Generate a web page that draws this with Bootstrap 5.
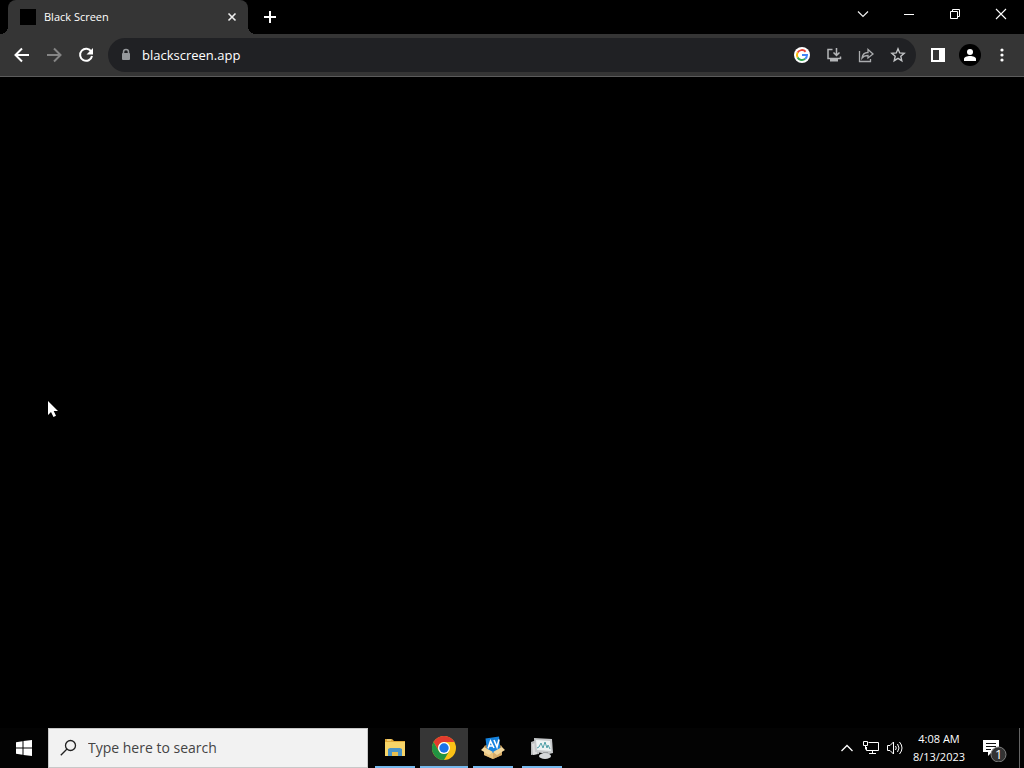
<!DOCTYPE html>
<html lang="en">
<head>
<meta charset="utf-8">
<meta name="viewport" content="width=device-width, initial-scale=1">
<title>Black Screen</title>
<link href="https://cdn.jsdelivr.net/npm/bootstrap@5.3.0/dist/css/bootstrap.min.css" rel="stylesheet">
<style>
  body { background: #000; color: #fff; font-family: "Open Sans", "Noto Sans", sans-serif; font-size: 11px; line-height: 18px; }
  svg { display: block; flex: none; }
  button { color: inherit; }
  .tool { border: 0; background: none; padding: 0; display: flex; align-items: center; justify-content: center; flex: none; }
  .tabstrip { height: 34px; padding-left: 8px; }
  .browser-tab { width: 240px; height: 34px; background: #353535; border-radius: 8px 8px 0 0; padding: 0 8px 0 12px; position: relative; }
  .browser-tab::before, .browser-tab::after { content: ""; position: absolute; bottom: 0; width: 8px; height: 8px; }
  .browser-tab::before { left: -8px; background: radial-gradient(circle at 0 0, #000 8px, #353535 8px); }
  .browser-tab::after { right: -8px; background: radial-gradient(circle at 100% 0, #000 8px, #353535 8px); }
  .favicon { width: 16px; height: 16px; background: #000; }
  .tab-close { width: 16px; height: 16px; }
  .new-tab { width: 28px; height: 34px; margin-left: 8px; }
  .win { width: 46px; height: 28px; }
  .toolbar { height: 43px; background: #353535; border-bottom: 1px solid #5c5c5c; padding: 0 6px; }
  .nav-tool { width: 32px; height: 32px; }
  .omnibox { height: 34px; border-radius: 17px; background: #202124; padding: 0 2px; margin: 0 6px; }
  .omnibox input { border: 0; outline: 0; background: none; color: #fff; font-size: 13px; line-height: 20px; min-width: 0; padding: 0; }
  .taskbar { height: 40px; background: #030303; }
  .start { width: 48px; height: 40px; }
  .search { width: 320px; height: 40px; background: #f2f2f2; border: 1px solid #c8c8c8; padding: 0 11px; color: #222; margin-right: 3px; }
  .search input { border: 0; outline: 0; background: none; font-size: 14px; line-height: 20px; padding: 0; min-width: 0; }
  .search input::placeholder { color: #444; opacity: 1; }
  .tasks { gap: 1px; }
  .task { width: 48px; height: 40px; position: relative; }
  .task::after { content: ""; position: absolute; bottom: 0; left: 4px; right: 4px; height: 2px; background: #76b9ed; }
  .task.active { background: #363636; }
  .task.active::after { left: 0; right: 0; }
  .tray { width: 24px; height: 40px; }
  .clock { width: 64px; height: 40px; text-align: center; }
  .notify { width: 48px; height: 40px; }
  .desktop-edge { width: 5px; height: 40px; border-left: 1px solid #666; }
  .pointer { position: absolute; left: 47px; top: 400px; }
</style>
</head>
<body>
<div class="d-flex flex-column min-vh-100">
  <header>
    <div class="tabstrip d-flex">
      <div class="browser-tab d-flex align-items-center">
        <span class="favicon me-2"></span>
        <span class="flex-grow-1">Black Screen</span>
        <button class="tool tab-close" aria-label="Close tab"><svg width="16" height="16" stroke="#eee" stroke-width="1.600"><path d="M4.500 4.500l7 7m0-7l-7 7"/></svg></button>
      </div>
      <button class="tool new-tab" aria-label="New tab"><svg width="14" height="14" stroke="#fff" stroke-width="2"><path d="M7 1v12M1 7h12"/></svg></button>
      <div class="d-flex ms-auto">
        <button class="tool win" aria-label="Search tabs"><svg width="12" height="12" fill="none" stroke="#eee" stroke-width="1.200"><path d="M1 3.500l5 5 5-5"/></svg></button>
        <button class="tool win" aria-label="Minimize"><svg width="12" height="12" stroke="#fff"><path d="M1 6.500h10"/></svg></button>
        <button class="tool win" aria-label="Restore"><svg width="12" height="12" fill="none" stroke="#fff"><path d="M1.500 3.500h7v7h-7zM3.500 3.500v-2h7v7h-2"/></svg></button>
        <button class="tool win" aria-label="Close"><svg width="12" height="12" stroke="#fff" stroke-width="1.100"><path d="M1 1l10 10M11 1L1 11"/></svg></button>
      </div>
    </div>
    <div class="toolbar d-flex align-items-center">
      <button class="tool nav-tool" aria-label="Back"><svg width="16" height="16" fill="none" stroke="#fff" stroke-width="2"><path d="M15 8H2M8 1.500L1.500 8 8 14.500"/></svg></button>
      <button class="tool nav-tool" aria-label="Forward"><svg width="16" height="16" fill="none" stroke="#858585" stroke-width="2"><path d="M1 8h13M8 1.500L14.500 8 8 14.500"/></svg></button>
      <button class="tool nav-tool" aria-label="Reload"><svg width="16" height="16" fill="none" stroke="#fff" stroke-width="2"><path d="M13.300 4.800A6 6 0 1 0 14 9"/><path d="M15 1v6.500H8.500z" fill="#fff" stroke="none"/></svg></button>
      <div class="omnibox d-flex align-items-center flex-grow-1">
        <button class="tool nav-tool" aria-label="Site information"><svg width="10" height="14" fill="none" stroke="#96999c" stroke-width="1.500"><path d="M2.500 6V4a2.500 2.500 0 0 1 5 0v2"/><rect x="1" y="5" width="8" height="7" rx="1" fill="#96999c" stroke="none"/></svg></button>
        <input class="flex-grow-1" type="text" value="blackscreen.app" aria-label="Address">
        <button class="tool nav-tool" aria-label="Google"><svg width="16" height="16" fill="none" stroke-width="2"><circle cx="8" cy="8" r="8" fill="#fff"/><path d="M11.600 4.700A5 5 0 0 0 3.600 5.600" stroke="#ea4335"/><path d="M3.600 5.600a5 5 0 0 0 0 4.800" stroke="#fbbc05"/><path d="M3.600 10.400a5 5 0 0 0 7.600 1.400" stroke="#34a853"/><path d="M11.200 11.800A5 5 0 0 0 13 8H8" stroke="#4285f4"/></svg></button>
        <button class="tool nav-tool" aria-label="Install app"><svg width="16" height="16" fill="none" stroke="#b4b6b8" stroke-width="1.500"><path d="M6.500 2.500H2v9h12.500V9.500M10.500 1v7M7.500 5.500l3 3 3-3"/><path d="M4 12h8v2.500H4z" fill="#b4b6b8" stroke="none"/></svg></button>
        <button class="tool nav-tool" aria-label="Share"><svg width="16" height="16" fill="none" stroke="#aaacae" stroke-width="1.300"><path d="M1.500 4v10.500h11V12M4 11c.5-4 2.500-5.500 6-5.500V2.500L15 7l-5 4V8.500c-2.500 0-4.500.5-6 2.500z"/></svg></button>
        <button class="tool nav-tool" aria-label="Bookmark"><svg width="16" height="16" fill="none" stroke="#c4c6c8" stroke-width="1.400"><path d="M8 1.800l1.700 4.100 4.500.4-3.400 3 1 4.400L8 11.400l-3.800 2.300 1-4.400-3.400-3 4.500-.4z"/></svg></button>
      </div>
      <button class="tool nav-tool" aria-label="Side panel"><svg width="16" height="16"><path d="M1 1h14v14H1zM3 3v10h6V3z" fill="#fff" fill-rule="evenodd"/></svg></button>
      <button class="tool nav-tool" aria-label="Profile"><svg width="22" height="22"><circle cx="11" cy="11" r="11" fill="#000"/><circle cx="11" cy="8" r="3" fill="#fff"/><path d="M5 17v-2c0-2 3-3 6-3s6 1 6 3v2z" fill="#fff"/></svg></button>
      <button class="tool nav-tool" aria-label="Menu"><svg width="4" height="16" fill="#fff"><circle cx="2" cy="3" r="1.600"/><circle cx="2" cy="8" r="1.600"/><circle cx="2" cy="13" r="1.600"/></svg></button>
    </div>
  </header>

  <main class="flex-grow-1"></main>

  <footer class="taskbar d-flex align-items-center">
    <button class="tool start" aria-label="Start"><svg width="16" height="16" fill="#fff"><path d="M0 2.300L6.500 1.300V7.500H0zM7.500 1.100L16 0V7.500H7.500zM0 8.500h6.500v6.200L0 13.700zM7.500 8.500H16V16l-8.500-1.100z"/></svg></button>
    <label class="search d-flex align-items-center">
      <svg class="me-2" width="20" height="20" fill="none" stroke="#222" stroke-width="1.300"><circle cx="10.500" cy="7.500" r="5"/><path d="M7 11L.8 17.200"/></svg>
      <input class="flex-grow-1" type="text" placeholder="Type here to search" aria-label="Search">
    </label>
    <div class="tasks d-flex">
      <button class="tool task" aria-label="File Explorer"><svg width="24" height="24"><path d="M2 3h7l2 2h11v6H2z" fill="#e0aa3a"/><path d="M2 6h20v14H2z" fill="#f7d568"/><path d="M5 20v-7l2-1h10l2 1v7h-4v-4H9v4z" fill="#4a94c8"/><path d="M9 16h6v4H9z" fill="#eabf4d"/><path d="M4 4h4" stroke="#faedae"/></svg></button>
      <button class="tool task active" aria-label="Google Chrome"><svg width="24" height="24"><circle cx="12" cy="12" r="12" fill="#fbc116"/><path d="M1.600 6A12 12 0 0 1 22.400 6H12a6 6 0 0 0-5.200 9z" fill="#e33b2e"/><path d="M1.600 6A12 12 0 0 0 12 24l5.200-9A6 6 0 0 1 6.800 15z" fill="#229342"/><circle cx="12" cy="12" r="6" fill="#fff"/><circle cx="12" cy="12" r="4.700" fill="#1a73e8"/></svg></button>
      <button class="tool task" aria-label="Antivirus package"><svg width="24" height="24"><path d="M3 10l9-4 9 4v9l-9 4-9-4z" fill="#b88b48"/><path d="M4.500 2.500L18 .5l1.500 13L12 18l-6-4z" fill="#1683df"/><path d="M7 12.500L9.500 5l3.500 7m-5-2h4m1-6l3 7 2-7.500" fill="none" stroke="#fff" stroke-width="1.600"/><path d="M3 12l9 5v6l-9-4z" fill="#e8c17b"/><path d="M21 12l-9 5v6l9-4z" fill="#d6ab68"/><path d="M3 11l-3 3 8 5 4-3zM21 11l3 3-8 5-4-3z" fill="#f3d79c"/></svg></button>
      <button class="tool task" aria-label="System monitor"><svg width="24" height="24"><path d="M1 6l8-3v15l-8 1z" fill="#b9bbbc"/><path d="M2 8l5-2v12l-4 1z" fill="#ddd"/><path d="M4 2l18 1 1 14-4 1-14-2z" fill="#c6c9cb"/><path d="M6 4l14 1 1 10-14-1z" fill="#eef3f3"/><path d="M7 12l2-1 2-4 2 5 2-6 2 6 1-3 2 4" fill="none" stroke="#51a0a8"/><path d="M13 16h5l1 3h-6z" fill="#9a9d9f"/><ellipse cx="15" cy="20" rx="6" ry="3" fill="#d5d8da"/></svg></button>
    </div>
    <div class="d-flex align-items-center ms-auto">
      <button class="tool tray" aria-label="Show hidden icons"><svg width="14" height="10" fill="none" stroke="#fff" stroke-width="1.300"><path d="M1.500 8L7 2.500 12.500 8"/></svg></button>
      <button class="tool tray" aria-label="Network"><svg width="18" height="16" fill="none" stroke="#fff"><path d="M6.500 2.500h10v8h-12V7M1.500 1.500h4v4h-4zM3.500 5.500v4M10.500 10.500v3M7 13.500h7"/></svg></button>
      <button class="tool tray" aria-label="Volume"><svg width="18" height="16" fill="none" stroke="#fff"><path d="M1.500 5.500h2.500l3.500-3.500v12L4 10.500H1.500zM9.500 6q1.500 2 0 4M11.500 4q3 4 0 8M13.500 2q5 6 0 12"/></svg></button>
      <button class="tool clock flex-column"><span>4:08 AM</span><span>8/13/2023</span></button>
      <button class="tool notify" aria-label="Notifications, 1 new"><svg width="28" height="28"><path d="M2 6h16v12H11l-4 4v-4H2z" fill="#fff"/><path d="M5 9.500h10M5 12.500h10M5 15.500h5" stroke="#111"/><circle cx="17.500" cy="20.500" r="7.500" fill="#333" stroke="#808080"/><text x="14" y="25" fill="#fff" font-size="13">1</text></svg></button>
      <div class="desktop-edge"></div>
    </div>
  </footer>
</div>
<svg class="pointer" width="14" height="20"><path d="M1 1v14l3-3 2.500 5 2.500-1.200L6.700 11H11z" fill="#fff"/></svg>
<script src="https://cdn.jsdelivr.net/npm/bootstrap@5.3.0/dist/js/bootstrap.bundle.min.js"></script>
</body>
</html>
